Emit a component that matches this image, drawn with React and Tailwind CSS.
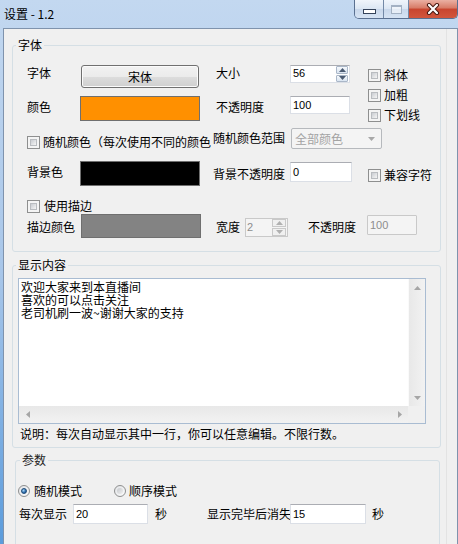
import React from "react";

function Check() {
  return (
    <div className="w-[13px] h-[13px] shrink-0 border border-[#8e8f8f] bg-[#f4f4f4] p-[2px]">
      <div className="w-full h-full border border-[#b9bcc0] bg-gradient-to-br from-[#c9ccd1] to-[#f5f5f5]" />
    </div>
  );
}

function Radio({ checked }) {
  return (
    <div className="w-[12px] h-[12px] shrink-0 rounded-full border border-[#8e8f8f] bg-gradient-to-br from-[#e2e4e7] to-[#fbfbfb] flex items-center justify-center">
      {checked ? (
        <div className="w-[6px] h-[6px] rounded-full bg-[radial-gradient(circle_at_35%_35%,#a8d6f7,#2f6fae_60%,#1c4f86)] border border-[#1f4b78]" />
      ) : (
        <div className="w-[6px] h-[6px] rounded-full bg-gradient-to-br from-[#c6c9cd] to-[#efefef]" />
      )}
    </div>
  );
}

function Up({ c }) {
  return (
    <svg width="7" height="4" viewBox="0 0 7 4">
      <path d="M0 4 L3.5 0 L7 4 Z" fill={c} />
    </svg>
  );
}
function Down({ c }) {
  return (
    <svg width="7" height="4" viewBox="0 0 7 4">
      <path d="M0 0 L3.5 4 L7 0 Z" fill={c} />
    </svg>
  );
}
function Left({ c }) {
  return (
    <svg width="4" height="7" viewBox="0 0 4 7">
      <path d="M4 0 L0 3.5 L4 7 Z" fill={c} />
    </svg>
  );
}
function Right({ c }) {
  return (
    <svg width="4" height="7" viewBox="0 0 4 7">
      <path d="M0 0 L4 3.5 L0 7 Z" fill={c} />
    </svg>
  );
}

const NUM = "font-['Liberation_Sans',sans-serif] text-[11px]";

function TextBox({ value, cls }) {
  return (
    <div className={`${cls} bg-white border border-[#dbdfe6] border-t-[#abadb3] flex items-center pl-[2px] ${NUM} leading-[14px]`}>
      {value}
    </div>
  );
}

function DisabledBox({ value, cls }) {
  return (
    <div className={`${cls} bg-[#f4f4f4] border border-[#c9c9c9] rounded-[1px] flex items-start pt-[2px] pl-[2px] ${NUM} leading-[14px] text-[#8d8d8d]`}>
      {value}
    </div>
  );
}

export default function App() {
  return (
    <div className="w-[458px] h-[544px] overflow-hidden flex flex-col bg-gradient-to-b from-[#c3d8f0] via-[#a8c6e9] to-[#5b9cdc] font-['Noto_Sans_CJK_SC','Noto_Sans',sans-serif] text-[12px] text-black">
      {/* title bar */}
      <div className="h-[28px] shrink-0 flex items-start">
        <div className="pl-[4px] pt-[6px] leading-[16px] text-[12px] text-black">设置 - 1.2</div>
        <div className="ml-auto flex h-[19px] rounded-b-[5px] border border-t-0 border-[#5a7090] overflow-hidden">
          <div className="w-[29px] h-full border-r border-[#7389a6] bg-[linear-gradient(#f0f5fb,#dbe6f3_50%,#c8d7ea_50%,#d6e3f3)] flex items-end justify-center pb-[4px]">
            <div className="w-[13px] h-[5px] bg-white border border-[#34435a]" />
          </div>
          <div className="w-[25px] h-full border-r border-[#7389a6] bg-[linear-gradient(#f0f5fb,#dbe6f3_50%,#c8d7ea_50%,#d6e3f3)] flex items-center justify-center">
            <div className="w-[11px] h-[9px] border border-[#a3b1c3] border-t-[2px] bg-white/50" />
          </div>
          <div className="w-[48px] h-full bg-[linear-gradient(#eab0a3,#d77a66_45%,#c8452f_50%,#d2563d)] flex items-center justify-center">
            <svg width="16" height="12" viewBox="0 0 16 12">
              <path d="M4 2 L12 10 M12 2 L4 10" stroke="#4a1a12" strokeWidth="4.2" strokeLinecap="round" />
              <path d="M4 2 L12 10 M12 2 L4 10" stroke="#ffffff" strokeWidth="2.2" strokeLinecap="round" />
            </svg>
          </div>
        </div>
      </div>

      {/* client */}
      <div className="flex-1 ml-[3px] flex border border-b-0 border-[#7f93ad] bg-[#f0f0f0]">
        <div className="w-[442px] shrink-0 flex flex-col">
          {/* 字体 group */}
          <fieldset className="mt-[9px] ml-[8px] w-[429px] h-[214px] border border-[#d5dfe5] rounded-[3px] pt-[11px]">
            <legend className="ml-[3px] px-[2px] leading-[14px]">字体</legend>
            <div className="pl-[14px] flex flex-col">
              {/* rows 1-2 */}
              <div className="flex items-start">
                <div className="flex flex-col gap-[8px]">
                  <div className="flex items-start">
                    <span className="w-[54px] mt-[2px] leading-[16px]">字体</span>
                    <div className="w-[118px] h-[23px] mt-[2px] rounded-[3px] border border-[#707070] bg-[linear-gradient(#f2f2f2,#ebebeb_50%,#dddddd_50%,#cfcfcf)] shadow-[inset_0_0_0_1px_#fbfbfb] flex items-center justify-center leading-[16px]">
                      宋体
                    </div>
                    <span className="ml-[17px] w-[74px] mt-[2px] leading-[16px]">大小</span>
                    <div className="w-[60px] h-[18px] mt-[2px] bg-white border border-[#dbdfe6] border-t-[#abadb3] flex">
                      <div className={`flex-1 pl-[2px] leading-[14px] ${NUM}`}>56</div>
                      <div className="w-[12px] flex flex-col gap-[1px] py-[0px] mr-[1px]">
                        <div className="flex-1 border border-[#aab7c8] rounded-[1px] bg-gradient-to-b from-[#f6f9fc] to-[#d9e4f1] flex items-center justify-center">
                          <Up c="#4b5b73" />
                        </div>
                        <div className="flex-1 border border-[#aab7c8] rounded-[1px] bg-gradient-to-b from-[#f6f9fc] to-[#d9e4f1] flex items-center justify-center">
                          <Down c="#4b5b73" />
                        </div>
                      </div>
                    </div>
                  </div>
                  <div className="flex items-start">
                    <span className="w-[53px] mt-[3px] leading-[16px]">颜色</span>
                    <div className="w-[120px] h-[25px] bg-[#ff9000] border border-[#6f6f6f]" />
                    <span className="ml-[16px] w-[74px] mt-[3px] leading-[16px]">不透明度</span>
                    <TextBox value="100" cls="w-[60px] h-[18px]" />
                  </div>
                </div>
                <div className="ml-[18px] mt-[2px] flex flex-col">
                  {["斜体", "加粗", "下划线"].map((t) => (
                    <div key={t} className="h-[20px] flex items-center gap-[3px]">
                      <Check />
                      <span className="leading-[16px]">{t}</span>
                    </div>
                  ))}
                </div>
              </div>

              {/* row 3 */}
              <div className="mt-[3px] flex items-start">
                <div className="mt-[6px] h-[16px] flex items-center gap-[3px] w-[186px]">
                  <Check />
                  <span className="leading-[16px] whitespace-nowrap">随机颜色（每次使用不同的颜色</span>
                </div>
                <span className="w-[78px] mt-[2px] leading-[16px] whitespace-nowrap">随机颜色范围</span>
                <div className="w-[91px] h-[21px] rounded-[2px] border border-[#b6b9bd] bg-[#f4f4f4] flex items-center pl-[3px] pr-[6px] text-[#a3a3a3]">
                  <span className="flex-1 leading-[16px]">全部颜色</span>
                  <Down c="#a8a8a8" />
                </div>
              </div>

              {/* row 4 */}
              <div className="mt-[11px] flex items-start">
                <span className="w-[53px] mt-[3px] leading-[16px]">背景色</span>
                <div className="w-[120px] h-[25px] bg-black border border-[#6f6f6f]" />
                <span className="ml-[13px] w-[77px] mt-[5px] leading-[16px] whitespace-nowrap">背景不透明度</span>
                <TextBox value="0" cls="w-[62px] h-[20px] mt-[1px]" />
                <div className="ml-[16px] mt-[6px] h-[16px] flex items-center gap-[3px]">
                  <Check />
                  <span className="leading-[16px]">兼容字符</span>
                </div>
              </div>

              {/* row 5 */}
              <div className="mt-[12px] h-[16px] flex items-center gap-[4px]">
                <Check />
                <span className="leading-[16px]">使用描边</span>
              </div>

              {/* row 6 */}
              <div className="flex items-start">
                <span className="w-[54px] mt-[5px] leading-[16px]">描边颜色</span>
                <div className="w-[120px] h-[24px] bg-[#838383] border border-[#6f6f6f]" />
                <span className="ml-[15px] w-[29px] mt-[5px] leading-[16px]">宽度</span>
                <div className="w-[43px] h-[19px] mt-[4px] bg-[#f4f4f4] border border-[#c9c9c9] flex">
                  <div className={`flex-1 pl-[1px] pt-[1px] leading-[14px] text-[#8d8d8d] ${NUM}`}>2</div>
                  <div className="w-[14px] flex flex-col gap-[1px] mr-[1px]">
                    <div className="flex-1 border border-[#c9c9c9] bg-[#f0f0f0] flex items-center justify-center">
                      <Up c="#b0b0b0" />
                    </div>
                    <div className="flex-1 border border-[#c9c9c9] bg-[#f0f0f0] flex items-center justify-center">
                      <Down c="#b0b0b0" />
                    </div>
                  </div>
                </div>
                <span className="ml-[20px] w-[59px] mt-[5px] leading-[16px]">不透明度</span>
                <DisabledBox value="100" cls="w-[50px] h-[20px] mt-[1px]" />
              </div>
            </div>
          </fieldset>

          {/* 显示内容 group */}
          <fieldset className="mt-[6px] ml-[8px] w-[429px] h-[190px] border border-[#d5dfe5] rounded-[3px] pt-[6px]">
            <legend className="ml-[3px] px-[2px] leading-[14px]">显示内容</legend>
            <div className="ml-[5px] w-[408px] h-[146px] border border-[#a9bcd2] bg-white flex flex-col">
              <div className="flex-1 flex min-h-0">
                <div className="flex-1 pl-[2px] pt-[1px] text-[12px] leading-[13px]">
                  <div>欢迎大家来到本直播间</div>
                  <div>喜欢的可以点击关注</div>
                  <div>老司机刷一波~谢谢大家的支持</div>
                </div>
                <div className="w-[17px] bg-gradient-to-r from-[#e8e8e8] to-[#f2f2f2] border-l border-[#fafafa] flex flex-col justify-between">
                  <div className="h-[17px] flex items-center justify-center">
                    <Up c="#a6a6a6" />
                  </div>
                  <div className="h-[17px] flex items-center justify-center">
                    <Down c="#a6a6a6" />
                  </div>
                </div>
              </div>
              <div className="h-[17px] flex">
                <div className="flex-1 bg-gradient-to-b from-[#e8e8e8] to-[#f2f2f2] flex justify-between">
                  <div className="w-[17px] flex items-center justify-center">
                    <Left c="#a6a6a6" />
                  </div>
                  <div className="w-[17px] flex items-center justify-center">
                    <Right c="#a6a6a6" />
                  </div>
                </div>
                <div className="w-[17px] bg-[#f0f0f0]" />
              </div>
            </div>
            <div className="ml-[7px] mt-[2px] leading-[16px] whitespace-nowrap">
              说明：每次自动显示其中一行，你可以任意编辑。不限行数。
            </div>
          </fieldset>

          {/* 参数 group */}
          <fieldset className="mt-[5px] ml-[11px] w-[425px] h-[100px] border border-[#d5dfe5] rounded-[3px] pt-[16px]">
            <legend className="ml-[4px] px-[2px] leading-[14px] text-[#222]">参数</legend>
            <div className="pl-[2px] h-[16px] flex items-center">
              <div className="w-[96px] flex items-center gap-[4px]">
                <Radio checked />
                <span className="leading-[16px]">随机模式</span>
              </div>
              <div className="flex items-center gap-[3px]">
                <Radio />
                <span className="leading-[16px]">顺序模式</span>
              </div>
            </div>
            <div className="mt-[5px] pl-[3px] flex items-start">
              <span className="w-[54px] mt-[2px] leading-[16px]">每次显示</span>
              <TextBox value="20" cls="w-[75px] h-[20px]" />
              <span className="ml-[7px] w-[52px] mt-[2px] leading-[16px]">秒</span>
              <span className="w-[83px] mt-[2px] leading-[16px] whitespace-nowrap">显示完毕后消失</span>
              <TextBox value="15" cls="w-[76px] h-[20px]" />
              <span className="ml-[6px] mt-[2px] leading-[16px]">秒</span>
            </div>
          </fieldset>
        </div>
        <div className="flex-1 border-l border-[#e3e3e3]" />
      </div>
    </div>
  );
}
